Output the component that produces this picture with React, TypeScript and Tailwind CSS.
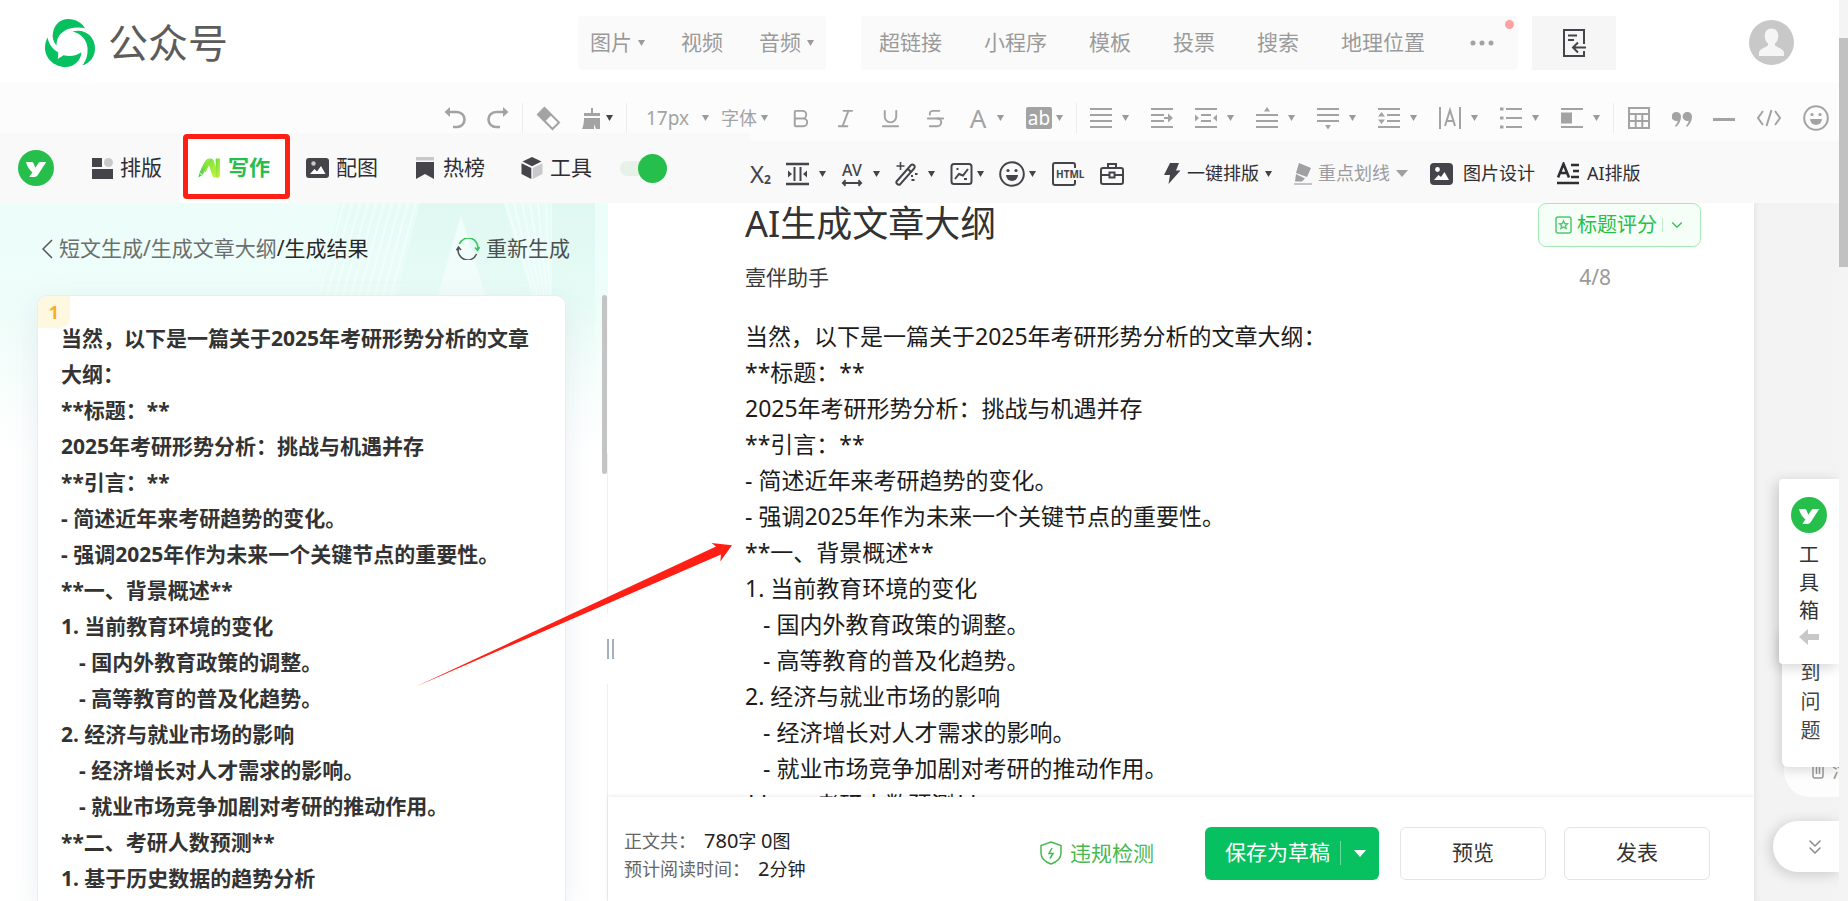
import React from "react";
import { Bold, Italic, Strikethrough, Underline, ChevronDown, ChevronsDown } from "lucide-react";

const font = "font-['Noto_Sans','Noto_Sans_CJK_SC',sans-serif]";

const outline: { text: string; sub?: boolean }[] = [
  { text: "当然，以下是一篇关于2025年考研形势分析的文章大纲：" },
  { text: "**标题：**" },
  { text: "2025年考研形势分析：挑战与机遇并存" },
  { text: "**引言：**" },
  { text: "- 简述近年来考研趋势的变化。" },
  { text: "- 强调2025年作为未来一个关键节点的重要性。" },
  { text: "**一、背景概述**" },
  { text: "1. 当前教育环境的变化" },
  { text: "- 国内外教育政策的调整。", sub: true },
  { text: "- 高等教育的普及化趋势。", sub: true },
  { text: "2. 经济与就业市场的影响" },
  { text: "- 经济增长对人才需求的影响。", sub: true },
  { text: "- 就业市场竞争加剧对考研的推动作用。", sub: true },
  { text: "**二、考研人数预测**" },
  { text: "1. 基于历史数据的趋势分析" },
];

function Outline({ className }: { className: string }) {
  return (
    <div className={className}>
      {outline.map((line) => (
        <p key={line.text} className={line.sub ? "pl-[18px]" : ""}>
          {line.text}
        </p>
      ))}
    </div>
  );
}

function Caret({ className = "text-[#9a9a9a]" }: { className?: string }) {
  return (
    <svg className={className} width="7" height="6" viewBox="0 0 7 6" fill="currentColor" aria-hidden="true">
      <path d="M0 0h7L3.5 6z" />
    </svg>
  );
}

function Glyph({ w = 22, h = 24, children }: { w?: number; h?: number; children: React.ReactNode }) {
  return (
    <svg
      className="shrink-0"
      width={w}
      height={h}
      viewBox={`0 0 ${w} ${h}`}
      fill="none"
      stroke="currentColor"
      strokeWidth="2"
      aria-hidden="true"
    >
      {children}
    </svg>
  );
}

function Tool({
  label,
  caret = false,
  dark = false,
  near = false,
  children,
}: {
  label: string;
  caret?: boolean;
  dark?: boolean;
  near?: boolean;
  children: React.ReactNode;
}) {
  return (
    <button type="button" aria-label={label} className={`flex items-center ${near ? "gap-1" : "gap-2.5"}`}>
      {children}
      {caret && <Caret className={dark ? "text-[#44444a]" : "text-[#9a9a9a]"} />}
    </button>
  );
}

function Divider() {
  return <span className="h-[30px] w-px bg-[#ececec]" />;
}

function YLogo() {
  return (
    <svg width="36" height="36" viewBox="0 0 36 36" aria-hidden="true">
      <circle cx="18" cy="18" r="18" fill="#26bf4b" />
      <path fill="#fff" d="M8 12h5.600q1.400 0 1.900 1.300l2.100 5.200-2.900 4q-5-3.500-6.700-10.500zM20.500 13q.7-1 2-1h5.700L19.800 25q-1.300 2-3.500 2h-5z" />
    </svg>
  );
}

function WechatLogo() {
  return (
    <svg width="50" height="48" viewBox="0 0 50 48" fill="#07c160" aria-hidden="true">
      <path d="M11.500 26.700C8 22 7 18 8 13.500 9.500 5 16 0 23 0c8 0 14 4 17 9.300-6-1.300-14-1.300-20 2.200-6 3.500-8.500 8.500-8.500 15.200z" />
      <path d="M2.600 18.600C3.500 24 6.500 29 11.500 32.300l1.800 1.200-.5 6.500 5.700-3.700c7.500 1.700 13.500.2 17.800-3C36 42 29 48 20.500 48 9 48 0 39 0 29c0-4 1-7.500 2.600-10.400z" />
      <path d="M27.500 12.600C40 9 50 18 50 29c0 9-5 15-12.700 17.500 3.700-4.500 5.700-10.500 5.200-17.500-.5-8-6.500-14.500-15-16.400z" />
    </svg>
  );
}

function Smiley() {
  return (
    <Glyph w={26} h={26}>
      <circle cx="13" cy="13" r="11.800" />
      <circle cx="9" cy="9.500" r="1.600" fill="currentColor" stroke="none" />
      <circle cx="17" cy="9.500" r="1.600" fill="currentColor" stroke="none" />
      <path d="M7 14h12a6 6 0 0 1-12 0z" fill="currentColor" stroke="none" />
    </Glyph>
  );
}

function Header() {
  const item = "flex items-center gap-1.5";
  return (
    <header className="flex h-[83px] shrink-0 items-start bg-white pt-4 text-[21px] text-[#9a9a9a]">
      <a href="#home" className="flex w-[578px] shrink-0 items-center gap-[13px] pl-[45px] text-[40px] leading-[54px] text-[#5c5c5c]">
        <WechatLogo />
        公众号
      </a>
      <nav className="flex h-[54px] shrink-0 items-center gap-9 rounded bg-[#fafafa] px-3">
        <button type="button" className={item}>图片<Caret /></button>
        <button type="button">视频</button>
        <button type="button" className={item}>音频<Caret /></button>
      </nav>
      <nav className="relative ml-[35px] flex h-[54px] shrink-0 items-center gap-[42px] rounded bg-[#fafafa] pr-6 pl-[18px]">
        <button type="button">超链接</button>
        <button type="button">小程序</button>
        <button type="button">模板</button>
        <button type="button">投票</button>
        <button type="button">搜索</button>
        <button type="button">地理位置</button>
        <button type="button" aria-label="更多" className="pl-[3px]">
          <svg width="24" height="6" viewBox="0 0 24 6" fill="#a3a3a3"><circle cx="3" cy="3" r="2.500" /><circle cx="12" cy="3" r="2.500" /><circle cx="21" cy="3" r="2.500" /></svg>
        </button>
        <span className="absolute top-1 right-1 size-[9px] rounded-full bg-[#ffa1a1]" />
      </nav>
      <button type="button" aria-label="导入文档" className="ml-[14px] flex h-[54px] w-[84px] shrink-0 items-center justify-center bg-[#f6f6f6] text-[#44444a]">
        <Glyph w={24} h={30}>
          <path d="M22 16V2H2v26h20v-5M6 7.500h9M6 12h6M24 19.500H12M16 14.500l-5 5 5 5" />
        </Glyph>
      </button>
      <button type="button" aria-label="账号" className="mt-1 mr-[45px] ml-auto">
        <svg width="45" height="45" viewBox="0 0 45 45">
          <circle cx="22.500" cy="22.500" r="22.500" fill="#c8c8c8" />
          <path d="M22.500 8.500c4.200 0 6.800 3 6.800 7.500 0 3.200-1.500 6-3.300 7.500v2c1.500 1.600 9 3.200 9 7.500v3H10v-3c0-4.300 7.500-5.900 9-7.500v-2c-1.800-1.500-3.300-4.300-3.300-7.500 0-4.500 2.600-7.500 6.800-7.500z" fill="#f5f5f5" />
        </svg>
      </button>
    </header>
  );
}

function FormatBar() {
  return (
    <div className="flex h-[50px] shrink-0 justify-end bg-[#fcfcfc] pt-5 pr-2.5 text-[#a3a3a3]">
      <div className="flex h-[30px] items-center gap-[13px]">
        <div className="flex items-center gap-[21px]">
          <Tool label="撤销"><Glyph><path d="M2 6h11a7 7 0 0 1 0 15H9" strokeWidth="2.600" /><path d="M6 1 0.500 6 6 11z" fill="currentColor" stroke="none" /></Glyph></Tool>
          <Tool label="重做"><Glyph><path d="M20 6H9a7 7 0 0 0 0 15h4" strokeWidth="2.600" /><path d="M16 1l5.500 5-5.500 5z" fill="currentColor" stroke="none" /></Glyph></Tool>
        </div>
        <Divider />
        <div className="flex items-center gap-[21px]">
          <Tool label="清除格式">
            <Glyph w={25} h={25}>
              <path d="M8.500 2 23 16.500 16.500 23 2 8.500z" />
              <path d="M8.500 1 16 8.500 8.500 16 1 8.500z" fill="currentColor" stroke="none" />
            </Glyph>
          </Tool>
          <Tool label="格式刷" caret dark near>
            <Glyph w={20}>
              <path d="M10 2v8" /><path d="M2 8.500h16" strokeWidth="3" />
              <path d="M2 12h16v11h-4l-2-5v5H0q2-4 2-11z" fill="currentColor" stroke="none" />
            </Glyph>
          </Tool>
        </div>
        <Divider />
        <div className="flex items-center gap-3 pl-1.5 text-[18px]">
          <div className="flex items-center">
            <select aria-label="字号" defaultValue="17px" className="w-[56px] appearance-none bg-transparent text-[19px]"><option>17px</option></select>
            <Caret />
          </div>
          <div className="flex items-center">
            <select aria-label="字体" defaultValue="字体" className="w-[40px] appearance-none bg-transparent"><option>字体</option></select>
            <Caret />
          </div>
        </div>
        <div className="flex items-center gap-[22px] pl-2">
          <Tool label="加粗"><Bold size={23} /></Tool>
          <Tool label="斜体"><Italic size={23} /></Tool>
          <Tool label="下划线"><Underline size={23} /></Tool>
          <Tool label="删除线"><Strikethrough size={23} /></Tool>
          <Tool label="文字颜色" caret><span className="w-[18px] text-[26px] leading-[30px]">A</span></Tool>
          <Tool label="背景色" caret near>
            <span className="flex h-[22px] w-[26px] items-center justify-center rounded-[2px] bg-[#a3a3a3] text-[19px] leading-[20px] text-white">ab</span>
          </Tool>
        </div>
        <Divider />
        <div className="flex items-center gap-[22px]">
          <Tool label="对齐" caret><Glyph><path d="M0 3h22M0 9h22M0 15h22M0 21h22" /></Glyph></Tool>
          <Tool label="首行缩进"><Glyph><path d="M0 3h22M0 9h13M0 15h13M0 21h22M13 12h5" /><path d="M17 7.500 22 12l-5 4.500z" fill="currentColor" stroke="none" /></Glyph></Tool>
          <Tool label="两端缩进" caret><Glyph><path d="M0 3h22M6 9h10M6 15h10M0 21h22" /><path d="M0 8.500 4 12l-4 3.500zM22 8.500 18 12l4 3.500z" fill="currentColor" stroke="none" /></Glyph></Tool>
          <Tool label="段前距" caret><Glyph><path d="M0 9h22M0 15h22M0 21h22" /><path d="M11 1l3 4.500H8z" fill="currentColor" stroke="none" /></Glyph></Tool>
          <Tool label="段后距" caret><Glyph><path d="M0 3h22M0 9h22M0 15h22" /><path d="M11 23.500l3-4.500H8z" fill="currentColor" stroke="none" /></Glyph></Tool>
          <Tool label="行间距" caret><Glyph><path d="M0 3h22M9 9h13M9 15h13M0 21h22" /><path d="M3.500 6l3.500 4.500H0zM3.500 18 7 13.500H0z" fill="currentColor" stroke="none" /></Glyph></Tool>
          <Tool label="字间距" caret><Glyph><path d="M1 1v22M21 1v22M6 20l5-16 5 16M7.500 15h7" /></Glyph></Tool>
          <Tool label="列表" caret><Glyph><path d="M6 3h16M6 12h16M6 21h16" /><path d="M0 3h3.500M0 12h3.500M0 21h3.500" strokeWidth="3" /></Glyph></Tool>
          <Tool label="图文环绕" caret><Glyph><path d="M0 3h22M0 21h22" /><path d="M0 6.500h11v11H0z" fill="currentColor" stroke="none" /></Glyph></Tool>
        </div>
        <Divider />
        <div className="flex items-center gap-[21px]">
          <Tool label="表格"><Glyph w={24}><path d="M2 2h20v20H2zM2 8h20M2 15h20M8.700 8v14M15.300 8v14" /></Glyph></Tool>
          <Tool label="引用">
            <Glyph w={20}>
              <path d="M4.500 6a4.500 4.500 0 0 1 4.500 4.500c0 4-2 8-5 10.500l-1-1q2.500-2.500 2.700-5.300A4.500 4.500 0 1 1 4.500 6zM15.500 6a4.500 4.500 0 0 1 4.500 4.500c0 4-2 8-5 10.500l-1-1q2.500-2.500 2.700-5.300A4.500 4.500 0 1 1 15.500 6z" fill="currentColor" stroke="none" />
            </Glyph>
          </Tool>
          <Tool label="分割线"><Glyph><path d="M0 13.500h22" strokeWidth="3" /></Glyph></Tool>
          <Tool label="代码"><Glyph w={26}><path d="M7 5 2 12l5 7M19 5l5 7-5 7M15.500 4l-5 16" /></Glyph></Tool>
          <Tool label="表情"><Smiley /></Tool>
        </div>
      </div>
    </div>
  );
}

function PluginTabs() {
  const tab = "relative flex h-full items-center gap-[7px] px-[18px]";
  return (
    <div className="flex h-[70px] w-[750px] shrink-0 items-center bg-[#f9f9f9] pl-[18px] text-[21px] text-[#2f2f33]">
      <YLogo />
      <button type="button" className={`${tab} ml-5`}>
        <svg width="21" height="21" viewBox="0 0 21 21" aria-hidden="true">
          <path d="M0 0h10v9H0zM0 11h21v10H0z" fill="#44444a" /><circle cx="16.500" cy="4.500" r="4.500" fill="#c9c9cc" />
        </svg>
        排版
      </button>
      <button type="button" className={`${tab} bg-white font-bold text-[#26bf4b]`}>
        <svg width="23" height="22" viewBox="0 0 24 22" aria-hidden="true">
          <defs>
            <linearGradient id="ai-a" x1="0" y1="1" x2="1" y2="0"><stop offset="0" stopColor="#3fcf4e" /><stop offset="1" stopColor="#a8ec3c" /></linearGradient>
            <linearGradient id="ai-n" x1="0" y1="0" x2="1" y2="1"><stop offset="0" stopColor="#5fdd3e" /><stop offset="1" stopColor="#d4f53a" /></linearGradient>
          </defs>
          <path d="M7.500 4Q9 1 12 1h1.500q2 0 2.700 2L22 21h-4.500q-1.800 0-2.400-2L11.500 8 8 15.500 3 12z" fill="url(#ai-n)" />
          <path d="M7 5.500 10 1.800h3L5 18l-3.500-2.200zM1.200 16.500 4.300 18.500 0.500 21z" fill="url(#ai-a)" />
          <path d="M18.500 1H23v17q0 3-2 3h-1.500q-1 0-1-3z" fill="url(#ai-n)" />
        </svg>
        写作
        <span className="absolute top-px -right-0.5 bottom-1 left-[3px] rounded-[4px] border-[5px] border-[#ff1f14]" />
      </button>
      <button type="button" className={tab}>
        <svg width="23" height="20" viewBox="0 0 23 20" aria-hidden="true">
          <rect width="23" height="20" rx="3" fill="#44444a" /><circle cx="7.500" cy="5.500" r="2.200" fill="#c9c9cc" /><path d="M4 16l4.500-5 2.500 2.500L15 8l4.500 8z" fill="#fff" />
        </svg>
        配图
      </button>
      <button type="button" className={tab}>
        <svg width="22" height="22" viewBox="-1 0 22 22" aria-hidden="true">
          <path d="M1 0h18v3.500H1z" fill="#c9c9cc" /><path d="M1 5h18v17l-9-5-9 5z" fill="#44444a" />
        </svg>
        热榜
      </button>
      <button type="button" className={tab}>
        <svg width="22" height="22" viewBox="0 0 22 22" aria-hidden="true">
          <path d="M11 0l9.500 4.500L11 9.300 1.500 4.500z" fill="#44444a" /><path d="M0.500 6.200 10.300 11v11L0.500 17z" fill="#44444a" /><path d="M21.500 6.200 11.700 11v11l9.800-5z" fill="#c9c9cc" />
        </svg>
        工具
      </button>
      <label className="relative ml-2.5 flex h-[30px] w-[48px] items-center">
        <input type="checkbox" defaultChecked aria-label="启用插件" className="peer sr-only" />
        <span className="h-[15px] w-[36px] rounded-full bg-[#e6f1e8]" />
        <span className="absolute left-0 size-[29px] rounded-full bg-[#26bf4b] peer-checked:left-[18px]" />
      </label>
    </div>
  );
}

function PluginTools() {
  return (
    <div className="mt-2 flex h-[62px] min-w-0 flex-1 items-center bg-[#f9f9f9] pt-[3px] text-[18px] text-[#2f2f33]">
      <div className="flex items-center gap-[15px] text-[#44444a]">
        <Tool label="下标"><span className="flex items-end text-[24px] leading-[26px]">X<span className="text-[12px] leading-[14px] font-bold">2</span></span></Tool>
        <Tool label="页边距" caret dark><Glyph w={23}><path d="M0 2h23M0 22h23" strokeWidth="2.400" /><path d="M8.500 5v14M14.500 5v14" /><path d="M2 8.500 6 12l-4 3.500zM21 8.500 17 12l4 3.500z" fill="currentColor" stroke="none" /></Glyph></Tool>
        <Tool label="字符宽度" caret dark>
          <span className="flex flex-col items-center text-[16px] leading-[18px] font-medium">
            AV
            <svg width="22" height="8" viewBox="0 0 24 8" fill="none" stroke="currentColor" strokeWidth="2"><path d="M2 4h20M5 1 2 4l3 3M19 1l3 3-3 3" /></svg>
          </span>
        </Tool>
        <Tool label="魔法棒" caret dark>
          <Glyph w={23}>
            <path d="M1.500 19.500 16 3q1.500-1 3 .3 1.300 1.200.2 3L5 22.500Q3.500 23.200 2.200 22 1 21 1.500 19.500zM13 7l3 3" />
            <path d="M5.500 0v8M1.500 4h8" strokeWidth="1.600" />
            <path d="M20 12h2.500M16.500 18h3M16 14h2" />
          </Glyph>
        </Tool>
        <Tool label="图表" caret dark near><Glyph w={23}><rect x="1.500" y="2" width="20" height="20" rx="2.500" /><path d="M5 17l4-5 4 1.500L18 7M6.500 7h2M14 17h3" /></Glyph></Tool>
        <Tool label="表情符号" caret dark near><Smiley /></Tool>
        <Tool label="HTML">
          <Glyph w={34} h={26}>
            <path d="M24 7V4q0-2-2-2H4Q2 2 2 4v18q0 2 2 2h18q2 0 2-2v-3" />
            <text x="5" y="16.500" fontSize="10" fontWeight="700" fill="currentColor" stroke="none">HTML</text>
          </Glyph>
        </Tool>
        <Tool label="工具箱"><Glyph w={24}><rect x="1" y="6" width="22" height="16" rx="2" /><path d="M8 6V2h8v4M1 13h8M15 13h8M9.500 10.500h5v5h-5z" /></Glyph></Tool>
      </div>
      <div className="ml-10 flex items-center gap-[22px]">
        <button type="button" className="flex items-center gap-1.5">
          <svg width="17" height="21" viewBox="0 0 17 21" fill="#44444a" aria-hidden="true"><path d="M6 0h9l-3 7.500h4.500L4.500 21 6 12H0z" /></svg>
          一键排版
          <Caret className="text-[#44444a]" />
        </button>
        <button type="button" className="flex items-center gap-1.5 text-[#9c9ca0]">
          <svg width="18" height="22" viewBox="0 0 18 22" aria-hidden="true">
            <path d="M5 0l12 5-4 9-11-4z M2 11l9 4.500-3 3H1z" fill="#a0a0a3" /><path d="M0 20h18v2H0z" fill="#c4c4c8" />
          </svg>
          重点划线
          <svg width="12" height="7" viewBox="0 0 12 7" fill="#a0a0a3" aria-hidden="true"><path d="M0 0h12L6 7z" /></svg>
        </button>
        <button type="button" className="flex items-center gap-2.5">
          <svg width="23" height="22" viewBox="0 0 23 22" aria-hidden="true">
            <rect width="23" height="22" rx="4" fill="#44444a" /><circle cx="7.500" cy="6.500" r="2.400" fill="#fff" /><path d="M4 17l4.500-5 2.500 2L14.500 9l4.500 8z" fill="#fff" />
          </svg>
          图片设计
        </button>
        <button type="button" className="flex items-center gap-2">
          <Glyph><path d="M1 15.500 6.500 2 12 15.500M3 11h7" strokeWidth="2.600" /><path d="M14 3h8M16 9h6M14 15h8M0 21h22" strokeWidth="2.600" /></Glyph>
          AI排版
        </button>
      </div>
    </div>
  );
}

function PanelArt() {
  const left = [0, 8, 16, 24, 32, 40, 48, 56, 64, 72];
  const right = [0, 8, 16, 24, 32, 40];
  return (
    <svg className="absolute inset-x-0 top-0" width="608" height="250" viewBox="0 0 608 250" aria-hidden="true">
      <defs>
        <linearGradient id="art-base" x1="0" y1="0" x2="0" y2="1"><stop offset="0" stopColor="#ecfef9" /><stop offset="0.450" stopColor="#effdf9" /><stop offset="1" stopColor="#ffffff" /></linearGradient>
        <linearGradient id="art-fade" x1="0" y1="0" x2="0" y2="1"><stop offset="0" stopColor="#dff8f1" /><stop offset="0.400" stopColor="#e6fbf5" /><stop offset="1" stopColor="#ffffff" stopOpacity="0" /></linearGradient>
      </defs>
      <path d="M0 0h608v250H0z" fill="url(#art-base)" />
      <path d="M340 0h80L370 200h-80z" fill="url(#art-fade)" opacity="0.400" />
      <path d="M420 0h83l62 200H370z" fill="url(#art-fade)" />
      <path d="M503 0h48v230h-12z" fill="url(#art-fade)" opacity="0.400" />
      <path d="M552 0h43v240h-43z" fill="url(#art-fade)" />
      <path d="M461 12l25 82h-49z" fill="#f0fdfa" />
      {left.map((d) => <path key={d} d={`M${344 + d} 0l-25 92`} stroke="#f6fffc" strokeWidth="2" opacity="0.700" />)}
      {right.map((d) => <path key={d} d={`M${506 + d} 0L${534 + d / 2.5} 92`} stroke="#f6fffc" strokeWidth="2" opacity="0.700" />)}
    </svg>
  );
}

function ResultPanel() {
  return (
    <aside className="relative flex w-[608px] shrink-0 flex-col border-r border-[#efefef] bg-white">
      <PanelArt />
      <div className="relative flex h-[92px] shrink-0 items-center justify-between pr-[37px] pl-[42px] text-[21px]">
        <nav className="flex items-center gap-1.5 text-[#6b6f6e]">
          <svg width="11" height="20" viewBox="0 0 11 20" fill="none" stroke="#555" strokeWidth="1.500" aria-hidden="true"><path d="M10 1 1 10l9 9" /></svg>
          <span>
            <a href="#short">短文生成</a>/<a href="#outline">生成文章大纲</a>
            <span className="text-[#26292a]">/生成结果</span>
          </span>
        </nav>
        <button type="button" className="flex items-center gap-1.5 text-[#4c504f]">
          <svg width="24" height="22" viewBox="0 0 24 22" fill="none" strokeWidth="1.600" aria-hidden="true">
            <path d="M3.500 6a9.500 9.500 0 0 1 18 6M19 9.500l2.500 3 2-3.300" stroke="#35c759" />
            <path d="M20.500 16a9.500 9.500 0 0 1-18-6M.5 12.300l2-3.300L5 12" stroke="#555" />
          </svg>
          重新生成
        </button>
      </div>
      <div className="relative flex min-h-0 flex-1 pl-[37px]">
        <article className="relative w-[530px] rounded-t-[10px] border border-b-0 border-[#ededf0] bg-white shadow-[0_8px_28px_rgba(190,200,215,0.3)]">
          <span className="absolute top-0 left-0 flex size-8 items-center justify-center rounded-tl-[10px] rounded-br-[10px] bg-[#fff8e1] text-[18px] font-bold text-[#f5b02a]">1</span>
          <div className="h-full overflow-hidden pt-[24px]">
            <Outline className="w-[500px] pl-[23px] text-[21px] leading-[36px] font-bold text-[#333]" />
          </div>
        </article>
        <span className="ml-9 h-[179px] w-[5px] rounded bg-[#c4c4c4]" />
      </div>
      <div className="absolute top-[411px] -right-[11px] flex h-[70px] w-[16px] items-center justify-center gap-[3px] bg-white">
        <span className="h-5 w-0.5 bg-[#a5b0bd]" />
        <span className="h-5 w-0.5 bg-[#a5b0bd]" />
      </div>
    </aside>
  );
}

function Editor() {
  return (
    <main className="flex min-w-0 flex-1 flex-col bg-white">
      <div className="min-h-0 flex-1 overflow-hidden pr-[53px] pl-[137px]">
        <div className="flex items-start justify-between">
          <h1 className="text-[36px] leading-[42px] text-[#333]">AI生成文章大纲</h1>
          <button type="button" className="flex h-[44px] items-center gap-[5px] rounded-lg border border-[#a5ebb5] bg-[#f6fff7] pr-3.5 pl-4 text-[20px] text-[#26bf4b]">
            <svg width="17" height="18" viewBox="0 0 17 18" fill="none" stroke="#55c873" strokeWidth="1.500" aria-hidden="true">
              <rect x="1" y="1" width="15" height="16" rx="2" /><path d="M8.500 5l1.200 2.500 2.700.3-2 1.900.6 2.700-2.500-1.400L6 12.400l.6-2.700-2-1.900 2.700-.3z" />
            </svg>
            标题评分
            <span className="h-3.5 w-px bg-[#bfeeca]" />
            <ChevronDown size={18} strokeWidth={1.500} />
          </button>
        </div>
        <div className="mt-[15px] flex items-center justify-between text-[21px] leading-[30px]">
          <span className="text-[#3a3a3a]">壹伴助手</span>
          <span className="mr-[90px] text-[#9a9a9a]">4/8</span>
        </div>
        <Outline className="mt-[26px] text-[23px] leading-[36px] text-[#1c1c1c]" />
      </div>
      <footer className="relative flex h-[104px] shrink-0 items-center bg-white pt-2 pr-[44px] pl-4 shadow-[0_-1px_4px_rgba(0,0,0,0.08)]">
        <dl className="pt-1 text-[18px] leading-[28px]">
          <div className="flex items-baseline">
            <dt className="text-[#666]">正文共：</dt>
            <dd className="pl-2 text-[#222]"><span className="text-[20px]">780</span>字 <span className="text-[20px]">0</span>图</dd>
          </div>
          <div className="flex items-baseline">
            <dt className="text-[#666]">预计阅读时间：</dt>
            <dd className="pl-2 text-[#222]"><span className="text-[20px]">2</span>分钟</dd>
          </div>
        </dl>
        <button type="button" className="ml-auto flex items-center gap-2 text-[21px] leading-[28px] text-[#4ab850]">
          <svg width="22" height="24" viewBox="0 0 22 24" fill="none" stroke="currentColor" strokeWidth="1.500" aria-hidden="true">
            <path d="M11 1l10 3.500V12q0 7.500-10 11Q1 19.500 1 12V4.500zM12 7l-3 5.500h4L10 17.500" />
          </svg>
          违规检测
        </button>
        <div className="ml-[51px] flex h-[53px] w-[174px] items-center rounded-md bg-[#07c160] text-[21px] text-white">
          <button type="button" className="pl-5">保存为草稿</button>
          <span className="ml-2.5 h-6 w-px bg-[#6adba0]" />
          <button type="button" aria-label="更多保存选项" className="flex h-full flex-1 items-center justify-center">
            <svg width="12" height="7" viewBox="0 0 12 7" fill="#fff"><path d="M0 0h12L6 7z" /></svg>
          </button>
        </div>
        <button type="button" className="ml-[21px] h-[53px] w-[146px] rounded-md border border-[#e4e4e4] text-[21px] text-[#333]">预览</button>
        <button type="button" className="ml-[18px] h-[53px] w-[146px] rounded-md border border-[#e4e4e4] text-[21px] text-[#333]">发表</button>
      </footer>
    </main>
  );
}

function Gutter() {
  return (
    <div className="relative w-[85px] shrink-0 overflow-hidden bg-[#f3f3f3] text-[20px] leading-[28px] text-[#444] shadow-[inset_6px_0_6px_-5px_rgba(0,0,0,0.07)]">
      <button type="button" className="absolute right-0 bottom-[104px] flex h-[60px] w-[55px] items-end gap-2 overflow-hidden rounded-bl-[26px] bg-[#fdfdfd] pb-3 pl-[28px] whitespace-nowrap text-[#999]">
        <svg className="mb-1.5 shrink-0" width="12" height="20" viewBox="0 0 12 20" fill="none" stroke="#999" strokeWidth="1.500" aria-hidden="true"><path d="M1 1v16q0 2 2 2h6q2 0 2-2V1M4.500 4v11M7.500 4v11" /></svg>
        清空
      </button>
      <button type="button" className="absolute right-0 bottom-[134px] flex h-[140px] w-[57px] flex-col items-center justify-end rounded-l-[6px] bg-white pb-[22px] leading-[29px] shadow-[-2px_3px_12px_rgba(0,0,0,0.15)]">
        <span>到</span><span>问</span><span>题</span>
      </button>
      <button type="button" className="absolute right-0 bottom-[237px] flex h-[185px] w-[60px] flex-col items-center rounded-l-[4px] bg-white pt-[18px] text-[#333] shadow-[-3px_3px_14px_rgba(0,0,0,0.18)]">
        <YLogo />
        <span className="pt-2">工</span><span>具</span><span>箱</span>
        <svg className="mt-1" width="20" height="16" viewBox="0 0 20 16" fill="#c8c8c8" aria-hidden="true"><path d="M9 0v5h11v6H9v5L0 8z" /></svg>
      </button>
      <button type="button" aria-label="回到底部" className="absolute right-0 bottom-[29px] flex h-[51px] w-[66px] items-center justify-center rounded-l-[25px] bg-white pl-[18px] text-[#8a8a8a] shadow-[-2px_2px_14px_rgba(0,0,0,0.18)]">
        <ChevronsDown size={24} strokeWidth={1.500} />
      </button>
    </div>
  );
}

export default function App() {
  return (
    <div className={`relative flex h-screen overflow-hidden bg-white text-left ${font}`}>
      <div className="flex min-w-0 flex-1 flex-col overflow-hidden">
        <Header />
        <FormatBar />
        <div className="flex shrink-0 bg-[#fcfcfc]">
          <PluginTabs />
          <PluginTools />
        </div>
        <div className="flex min-h-0 flex-1">
          <ResultPanel />
          <Editor />
          <Gutter />
        </div>
      </div>
      <div className="w-[9px] shrink-0 bg-[#f4f4f4] pt-[38px]">
        <div className="h-[229px] bg-[#c1c1c1]" />
      </div>
      <svg className="pointer-events-none absolute top-[540px] left-[412px]" width="324" height="150" viewBox="0 0 324 150" aria-hidden="true">
        <path d="M3 147 304 6.500 299.500 3 320 5.300 308.300 21.500 309 14.500z" fill="#ff1f14" />
      </svg>
    </div>
  );
}
